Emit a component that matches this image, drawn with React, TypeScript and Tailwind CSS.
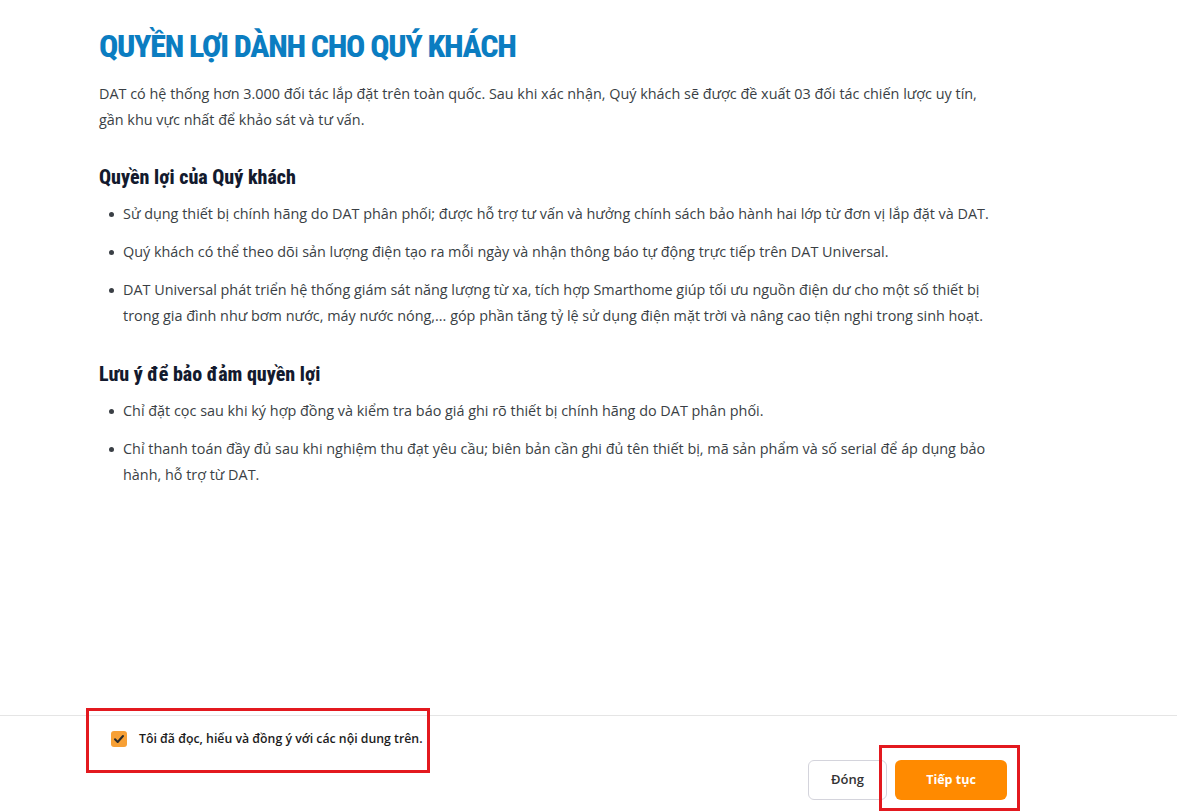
import React from "react";

const body = { fontFamily: '"Open Sans", "Noto Sans", sans-serif' };
const cond = { fontFamily: 'Roboto, "Open Sans", sans-serif', fontStretch: "75%" };

function Item({ children }: { children: React.ReactNode }) {
  return (
    <li className="flex items-start">
      <span className="mt-[11px] mr-[9px] ml-[10px] h-[5px] w-[5px] shrink-0 rounded-full bg-[#3a3f45]" />
      <span>{children}</span>
    </li>
  );
}

export default function App() {
  return (
    <div className="relative flex h-[812px] w-full flex-col bg-white text-[#3a3f45]" style={body}>
      <main className="flex-1 pl-[99px] pt-[26px]">
        <div className="w-[900px]">
          <h1 className="text-[32px] font-extrabold leading-[40px] tracking-[-1.3px] text-[#0b7dc1]" style={cond}>
            QUYỀN LỢI DÀNH CHO QUÝ KHÁCH
          </h1>
          <p className="mt-[15px] text-[14.4px] leading-[26px]">
            DAT có hệ thống hơn 3.000 đối tác lắp đặt trên toàn quốc. Sau khi xác nhận, Quý khách sẽ được đề xuất 03 đối tác chiến lược uy tín, gần khu vực nhất để khảo sát và tư vấn.
          </p>
          <h2 className="mt-[30px] text-[20px] font-extrabold leading-[28px] text-[#131a2e]" style={cond}>
            Quyền lợi của Quý khách
          </h2>
          <ul className="mt-[10px] flex flex-col gap-[12px] text-[14.4px] leading-[26px]">
            <Item>Sử dụng thiết bị chính hãng do DAT phân phối; được hỗ trợ tư vấn và hưởng chính sách bảo hành hai lớp từ đơn vị lắp đặt và DAT.</Item>
            <Item>Quý khách có thể theo dõi sản lượng điện tạo ra mỗi ngày và nhận thông báo tự động trực tiếp trên DAT Universal.</Item>
            <Item>DAT Universal phát triển hệ thống giám sát năng lượng từ xa, tích hợp Smarthome giúp tối ưu nguồn điện dư cho một số thiết bị trong gia đình như bơm nước, máy nước nóng,... góp phần tăng tỷ lệ sử dụng điện mặt trời và nâng cao tiện nghi trong sinh hoạt.</Item>
          </ul>
          <h2 className="mt-[31px] text-[20px] font-extrabold leading-[28px] text-[#131a2e]" style={cond}>
            Lưu ý để bảo đảm quyền lợi
          </h2>
          <ul className="mt-[10px] flex flex-col gap-[12px] text-[14.4px] leading-[26px]">
            <Item>Chỉ đặt cọc sau khi ký hợp đồng và kiểm tra báo giá ghi rõ thiết bị chính hãng do DAT phân phối.</Item>
            <Item>Chỉ thanh toán đầy đủ sau khi nghiệm thu đạt yêu cầu; biên bản cần ghi đủ tên thiết bị, mã sản phẩm và số serial để áp dụng bảo hành, hỗ trợ từ DAT.</Item>
          </ul>
        </div>
      </main>
      <footer className="border-t border-[#e5e5e5] pt-[15px] pb-[12px]">
        <label className="ml-[111px] flex h-[16px] items-center gap-[12px]">
          <span className="flex h-[16px] w-[16px] items-center justify-center rounded-[3px] bg-[#f7a035]">
            <svg width="12" height="12" viewBox="0 0 12 12" fill="none">
              <path d="M2 6.2 L4.7 9 L10 3" stroke="#2b2b2b" strokeWidth="2" strokeLinecap="round" strokeLinejoin="round" />
            </svg>
          </span>
          <span className="text-[12.3px] font-semibold text-[#1c1c1c]">Tôi đã đọc, hiểu và đồng ý với các nội dung trên.</span>
        </label>
        <div className="mt-[13px] flex justify-end gap-[8px] pr-[170px]">
          <button className="h-[40px] w-[79px] rounded-[6px] border border-[#d4d4dc] bg-white text-[13px] font-semibold text-[#333]">
            Đóng
          </button>
          <button className="h-[40px] w-[112px] rounded-[6px] bg-[#ff8a00] text-[12.5px] font-bold text-white">
            Tiếp tục
          </button>
        </div>
      </footer>
      <div className="pointer-events-none absolute left-[86px] top-[708px] h-[65px] w-[344px] border-[3px] border-[#e3191f]" />
      <div className="pointer-events-none absolute left-[879px] top-[745px] h-[66px] w-[141px] border-[3px] border-[#e3191f]" />
    </div>
  );
}
